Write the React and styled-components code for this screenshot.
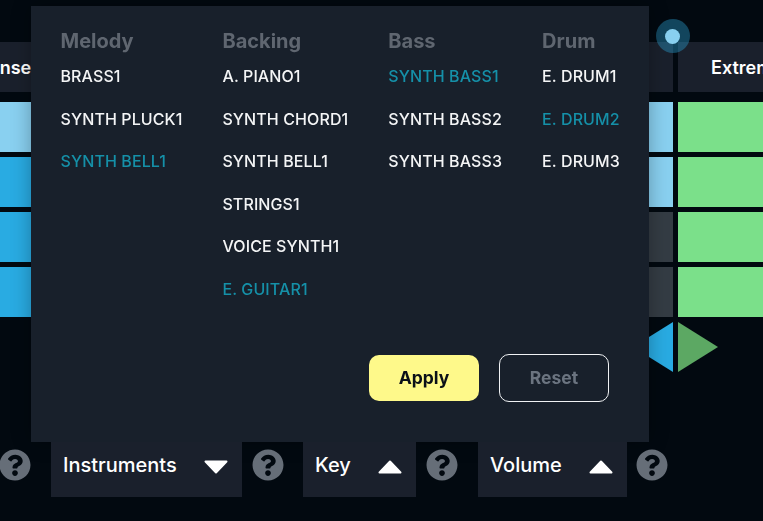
import React from "react";
import styled, { createGlobalStyle } from "styled-components";
import { FaQuestionCircle } from "react-icons/fa";

const Global = createGlobalStyle`
  html, body { margin: 0; height: 100%; background: #020910; overflow: hidden; }
  body { font-family: Inter, "Liberation Sans", sans-serif; color: #fff; }
`;

const Page = styled.div`
  position: relative;
  width: 763px;
  height: 521px;
  overflow: hidden;
  padding-top: 42px;
  box-sizing: border-box;
`;

const Track = styled.div`
  position: relative;
  display: grid;
  grid-template-columns: 713px 125px;
  column-gap: 5px;
  row-gap: 5px;
  margin-left: -40px;
`;

const HeaderCell = styled.div`
  height: 50px;
  margin-bottom: 5px;
  display: flex;
  align-items: center;
  padding-left: ${(p) => p.$inset}px;
  background: #1a202c;
  font-size: 18px;
  font-weight: 600;
  white-space: nowrap;
`;

const Cell = styled.div`
  height: 50px;
  background: ${(p) => p.$color};
`;

const ArrowCell = styled.div`
  height: 50px;
  display: flex;
  justify-content: ${(p) => p.$side};
`;

const Playhead = styled.div`
  position: absolute;
  left: 695.5px;
  top: -23px;
  width: 34px;
  height: 34px;
  border-radius: 50%;
  background: rgba(41, 152, 200, 0.42);
  display: flex;
  align-items: center;
  justify-content: center;
`;

const PlayheadDot = styled.div`
  width: 15px;
  height: 15px;
  border-radius: 50%;
  background: #89d0f0;
`;

const Modal = styled.div`
  position: absolute;
  left: 31px;
  top: 6px;
  width: 618px;
  height: 436px;
  box-sizing: border-box;
  padding: 23px 40px 40px 29.5px;
  background: #18202b;
  box-shadow: 0 0 18px rgba(0, 0, 0, 0.3);
  display: flex;
  flex-direction: column;
  justify-content: space-between;
  will-change: transform;
`;

const Columns = styled.div`
  display: flex;
  gap: 40px;
`;

const Column = styled.div`
  display: flex;
  flex-direction: column;
`;

const Heading = styled.div`
  font-size: 20px;
  font-weight: 700;
  line-height: 24px;
  color: #5f6670;
  margin-bottom: 11px;
`;

const Item = styled.div`
  font-size: 16px;
  font-weight: 500;
  line-height: 24px;
  letter-spacing: 0.1px;
  height: 42.5px;
  white-space: nowrap;
  color: ${(p) => (p.$active ? "#1590a8" : "#f4f5f6")};
`;

const Actions = styled.div`
  display: flex;
  justify-content: flex-end;
  align-items: center;
  gap: 20px;
`;

const ApplyButton = styled.button`
  width: 110px;
  height: 46px;
  border: 0;
  border-radius: 10px;
  padding: 0 0 2px;
  background: #fef98a;
  color: #0b1018;
  font: 700 17.5px Inter, sans-serif;
`;

const ResetButton = styled.button`
  width: 110px;
  height: 48px;
  border: 1px solid #f0f2f4;
  border-radius: 10px;
  padding: 0 0 2px;
  background: transparent;
  color: #6b7480;
  font: 700 17.5px Inter, sans-serif;
`;

const BottomBar = styled.div`
  position: absolute;
  left: 0;
  right: 0;
  top: 442px;
  display: flex;
  align-items: flex-start;
`;

const Selector = styled.div`
  width: ${(p) => p.$width}px;
  margin-left: ${(p) => p.$gap}px;
  height: 55px;
  box-sizing: border-box;
  padding: 0 14px 10px 12px;
  background: #1a202c;
  display: flex;
  align-items: center;
  justify-content: space-between;
  font-size: 20px;
  font-weight: 500;
`;

const Help = styled(FaQuestionCircle)`
  width: 32px;
  height: 32px;
  flex: none;
  margin-left: ${(p) => p.$gap}px;
  margin-top: 6.5px;
  color: #666e78;
`;

const Caret = ({ up }) => (
  <svg width="24" height="14" viewBox="0 0 24 14" style={{ transform: up ? "translateY(2px)" : "translateY(2px) rotate(180deg)" }}>
    <path d="M12 1.5 L22.5 12.5 H1.5 Z" fill="#fff" stroke="#fff" strokeWidth="2" strokeLinejoin="round" />
  </svg>
);

const groups = [
  ["Melody", ["BRASS1", "SYNTH PLUCK1", "SYNTH BELL1"], "SYNTH BELL1"],
  ["Backing", ["A. PIANO1", "SYNTH CHORD1", "SYNTH BELL1", "STRINGS1", "VOICE SYNTH1", "E. GUITAR1"], "E. GUITAR1"],
  ["Bass", ["SYNTH BASS1", "SYNTH BASS2", "SYNTH BASS3"], "SYNTH BASS1"],
  ["Drum", ["E. DRUM1", "E. DRUM2", "E. DRUM3"], "E. DRUM2"],
];

const rows = [
  ["#89d0f0", "#7be08a", "#89d0f0"],
  ["#29abe2", "#7be08a", "#89d0f0"],
  ["#29abe2", "#7be08a", "#343c44"],
  ["#29abe2", "#7be08a", "#343c44"],
];

const SplitCell = styled.div`
  height: 50px;
  display: flex;
  justify-content: space-between;
`;

const Segment = styled.div`
  width: ${(p) => p.$width}px;
  background: ${(p) => p.$color};
`;

export default function App() {
  return (
    <Page>
      <Global />
      <Track>
        <HeaderCell $inset={16}>Dense</HeaderCell>
        <HeaderCell $inset={33}>Extreme</HeaderCell>
        {rows.map(([left, right, near], i) => (
          <React.Fragment key={i}>
            <SplitCell>
              <Segment $width={100} $color={left} />
              <Segment $width={100} $color={near} />
            </SplitCell>
            <Cell $color={right} />
          </React.Fragment>
        ))}
        <ArrowCell $side="flex-end">
          <svg width="40" height="50" viewBox="0 0 40 50"><path d="M40 0 V50 L0 25 Z" fill="#29abe2" /></svg>
        </ArrowCell>
        <ArrowCell $side="flex-start">
          <svg width="40" height="50" viewBox="0 0 40 50"><path d="M0 0 V50 L40 25 Z" fill="#5ca863" /></svg>
        </ArrowCell>
        <Playhead><PlayheadDot /></Playhead>
      </Track>
      <Modal>
        <Columns>
          {groups.map(([title, items, active]) => (
            <Column key={title}>
              <Heading>{title}</Heading>
              {items.map((item) => (
                <Item key={item} $active={item === active}>{item}</Item>
              ))}
            </Column>
          ))}
        </Columns>
        <Actions>
          <ApplyButton>Apply</ApplyButton>
          <ResetButton>Reset</ResetButton>
        </Actions>
      </Modal>
      <BottomBar>
        <Help $gap={-1} />
        <Selector $gap={20} $width={191}>Instruments<Caret /></Selector>
        <Help $gap={10} />
        <Selector $gap={19} $width={113}>Key<Caret up /></Selector>
        <Help $gap={10} />
        <Selector $gap={20} $width={149}>Volume<Caret up /></Selector>
        <Help $gap={9} />
      </BottomBar>
    </Page>
  );
}
